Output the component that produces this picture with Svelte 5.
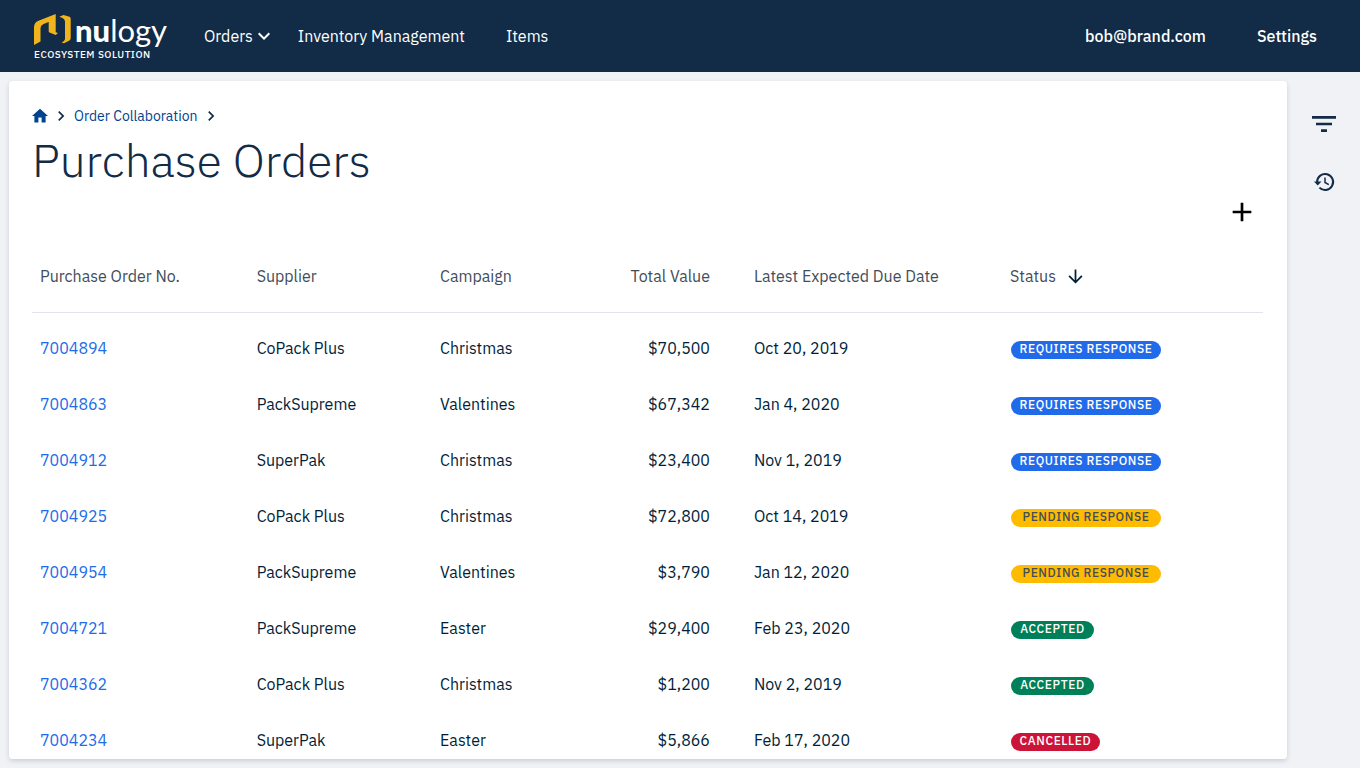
<script lang="ts">
  type Status = 'requires' | 'pending' | 'accepted' | 'cancelled';

  const labels: Record<Status, string> = {
    requires: 'Requires response',
    pending: 'Pending response',
    accepted: 'Accepted',
    cancelled: 'Cancelled'
  };

  const orders: { id: string; supplier: string; campaign: string; value: string; due: string; status: Status }[] = [
    { id: '7004894', supplier: 'CoPack Plus', campaign: 'Christmas', value: '$70,500', due: 'Oct 20, 2019', status: 'requires' },
    { id: '7004863', supplier: 'PackSupreme', campaign: 'Valentines', value: '$67,342', due: 'Jan 4, 2020', status: 'requires' },
    { id: '7004912', supplier: 'SuperPak', campaign: 'Christmas', value: '$23,400', due: 'Nov 1, 2019', status: 'requires' },
    { id: '7004925', supplier: 'CoPack Plus', campaign: 'Christmas', value: '$72,800', due: 'Oct 14, 2019', status: 'pending' },
    { id: '7004954', supplier: 'PackSupreme', campaign: 'Valentines', value: '$3,790', due: 'Jan 12, 2020', status: 'pending' },
    { id: '7004721', supplier: 'PackSupreme', campaign: 'Easter', value: '$29,400', due: 'Feb 23, 2020', status: 'accepted' },
    { id: '7004362', supplier: 'CoPack Plus', campaign: 'Christmas', value: '$1,200', due: 'Nov 2, 2019', status: 'accepted' },
    { id: '7004234', supplier: 'SuperPak', campaign: 'Easter', value: '$5,866', due: 'Feb 17, 2020', status: 'cancelled' }
  ];
</script>

<div class="shell">
  <header>
    <a class="brand" href="#home">
      <span class="logo">
        <svg width="37" height="32" viewBox="0 0 37 32" aria-hidden="true">
          <path fill="#f2b41d" d="M0 31V13.500Q0 8.500 4.500 6.700L21.700 0V18.300L24 19 21.700 21 15.500 18.500Q14.700 18 14.700 17V8L9.500 10Q6.500 11.300 6.500 14V27.500ZM25.300 2.700 29.500 1 35.500 2.800Q36.700 3.300 36.700 5V24Q36.700 26 35 26.800L30 29.300 27.500 28.400Q31 27 31 24.500V7.500Q31 5 28.500 4Z" />
        </svg>
        <span class="word"><b>nu</b>logy</span>
      </span>
      <span class="tagline">ECOSYSTEM SOLUTION</span>
    </a>
    <nav class="main">
      <button type="button">
        Orders
        <svg width="22" height="24" viewBox="1 0 22 24" fill="currentColor" aria-hidden="true"><path d="M7.410 8.590 12 13.170l4.590-4.580L18 10l-6 6-6-6z" /></svg>
      </button>
      <a href="#inventory">Inventory Management</a>
      <a class="items" href="#items">Items</a>
    </nav>
    <nav class="user">
      <a href="#account">bob@brand.com</a>
      <a href="#settings">Settings</a>
    </nav>
  </header>

  <div class="body">
    <main>
      <nav class="crumbs" aria-label="Breadcrumb">
        <a href="#home" aria-label="Home"><svg width="16" height="16" viewBox="2 2 20 20" fill="currentColor"><path d="M10 20v-6h4v6h5v-8h3L12 3 2 12h3v8z" /></svg></a>
        <svg class="sep" width="20" height="20" viewBox="0 0 24 24" fill="currentColor" aria-hidden="true"><path d="M8.590 16.590 13.170 12 8.590 7.410 10 6l6 6-6 6z" /></svg>
        <a href="#collaboration">Order Collaboration</a>
        <svg class="sep" width="20" height="20" viewBox="0 0 24 24" fill="currentColor" aria-hidden="true"><path d="M8.590 16.590 13.170 12 8.590 7.410 10 6l6 6-6 6z" /></svg>
      </nav>
      <h1>Purchase Orders</h1>
      <div class="actions">
        <button type="button" aria-label="Add">
          <svg width="32" height="32" viewBox="0 0 24 24" fill="#000"><path d="M19 13h-6v6h-2v-6H5v-2h6V5h2v6h6z" /></svg>
        </button>
      </div>
      <table>
        <colgroup>
          <col class="c-id" /><col class="c-name" /><col class="c-name" /><col class="c-value" /><col class="c-date" /><col />
        </colgroup>
        <thead>
          <tr>
            <th>Purchase Order No.</th>
            <th>Supplier</th>
            <th>Campaign</th>
            <th class="num">Total Value</th>
            <th>Latest Expected Due Date</th>
            <th aria-sort="descending">
              <button class="sort" type="button">
                Status
                <svg width="21" height="21" viewBox="0 0 24 24" fill="currentColor" aria-hidden="true"><path d="m20 12-1.410-1.410L13 16.170V4h-2v12.170l-5.580-5.590L4 12l8 8z" /></svg>
              </button>
            </th>
          </tr>
        </thead>
        <tbody>
          {#each orders as o (o.id)}
            <tr>
              <td><a href="#{o.id}">{o.id}</a></td>
              <td>{o.supplier}</td>
              <td>{o.campaign}</td>
              <td class="num">{o.value}</td>
              <td>{o.due}</td>
              <td><span class="badge {o.status}">{labels[o.status]}</span></td>
            </tr>
          {/each}
        </tbody>
      </table>
    </main>

    <aside>
      <button type="button" aria-label="Filter">
        <svg width="32" height="32" viewBox="0 0 24 24" fill="currentColor"><path d="M9.750 18h4.500v-2h-4.500v2zM3 6v2h18V6H3zm3 7h12v-2H6v2z" /></svg>
      </button>
      <button type="button" aria-label="History">
        <svg width="24" height="24" viewBox="0 0 24 24" fill="none" stroke="currentColor"><path stroke-width="2" d="M5.100 12A8 8 0 1 1 7.400 17.600" /><path stroke-width="1.500" d="M13 7.500V12.500L16.800 14.700" /><path fill="currentColor" stroke="none" d="M2 11.500H9.500L5.700 15.500Z" /></svg>
      </button>
    </aside>
  </div>
</div>

<style>
  :global(body) {
    margin: 0;
    background: #f0f2f5;
  }
  .shell {
    display: flex;
    flex-direction: column;
    height: 100vh;
    font: 16px/24px "IBM Plex Sans", Roboto, sans-serif;
    color: #011e38;
  }
  a {
    color: inherit;
    text-decoration: none;
  }
  button {
    display: flex;
    align-items: center;
    padding: 0;
    border: 0;
    background: none;
    color: inherit;
    font: inherit;
    cursor: pointer;
  }
  svg {
    display: block;
    flex: none;
  }
  header {
    display: flex;
    align-items: center;
    flex: none;
    height: 72px;
    padding: 0 43px 0 34px;
    box-sizing: border-box;
    background: #122b47;
    color: #fff;
  }
  .brand {
    display: flex;
    flex-direction: column;
    width: 170px;
  }
  .logo {
    display: flex;
    align-items: center;
    gap: 4px;
    height: 36px;
  }
  .word {
    font: 400 31px/32px Lato, sans-serif;
  }
  .word b {
    font-weight: 900;
  }
  .tagline {
    font-size: 10px;
    line-height: 14px;
    margin-bottom: -2px;
    font-weight: 500;
    letter-spacing: 0.05em;
  }
  .main,
  .user {
    display: flex;
    align-items: center;
  }
  .main {
    gap: 23px;
  }
  .main .items {
    margin-left: 18px;
  }
  .user {
    margin-left: auto;
    gap: 51px;
    font-weight: 500;
  }
  .body {
    display: flex;
    flex: 1;
    min-height: 0;
    padding: 9px 0 9px 9px;
  }
  main {
    flex: 1;
    padding: 23px 24px 23px 23px;
    box-sizing: border-box;
    border-radius: 4px;
    background: #fff;
    box-shadow: 0 2px 5px rgba(1, 30, 56, 0.16);
    overflow-y: auto;
    scrollbar-width: none;
  }
  .crumbs {
    display: flex;
    align-items: center;
    gap: 3px;
    height: 24px;
    font-size: 14px;
    color: #00438f;
  }
  .sep {
    color: #122b47;
  }
  h1 {
    margin: 0;
    font-size: 46px;
    line-height: 64px;
    font-weight: 300;
    color: #122b47;
  }
  .actions {
    display: flex;
    justify-content: flex-end;
    padding: 4px 5px 12px;
  }
  table {
    width: 100%;
    border-spacing: 0;
    table-layout: fixed;
  }
  .c-id {
    width: 17.6%;
  }
  .c-name {
    width: 14.9%;
  }
  .c-value {
    width: 10.6%;
  }
  .c-date {
    width: 20.8%;
  }
  th,
  td {
    padding: 0 8px;
    text-align: left;
    white-space: nowrap;
  }
  th {
    height: 72px;
    border-bottom: 1px solid #e1e4ea;
    font-weight: 400;
    color: #434d59;
  }
  td {
    height: 56px;
  }
  tbody::before {
    content: "";
    display: table-row;
    height: 7px;
  }
  td a {
    color: #216beb;
  }
  .num {
    padding-right: 36px;
    text-align: right;
  }
  .sort {
    gap: 9px;
  }
  .sort svg {
    color: #011e38;
  }
  .badge {
    display: block;
    width: fit-content;
    margin: 3px 0 0 1px;
    padding: 0 8px 2px;
    border-radius: 9px;
    font-size: 12px;
    line-height: 16px;
    font-weight: 500;
    letter-spacing: 0.05em;
    text-transform: uppercase;
    text-align: center;
    color: #fff;
  }
  .requires {
    background: #216beb;
  }
  .pending {
    background: #ffbb00;
    color: #434d59;
  }
  .requires,
  .pending {
    min-width: 134px;
  }
  .accepted {
    min-width: 67px;
    background: #008059;
  }
  .cancelled {
    min-width: 73px;
    background: #cc1439;
  }
  aside {
    display: flex;
    flex-direction: column;
    align-items: center;
    flex: none;
    gap: 30px;
    width: 73px;
    padding-top: 27px;
    box-sizing: border-box;
    color: #122b47;
  }
</style>
